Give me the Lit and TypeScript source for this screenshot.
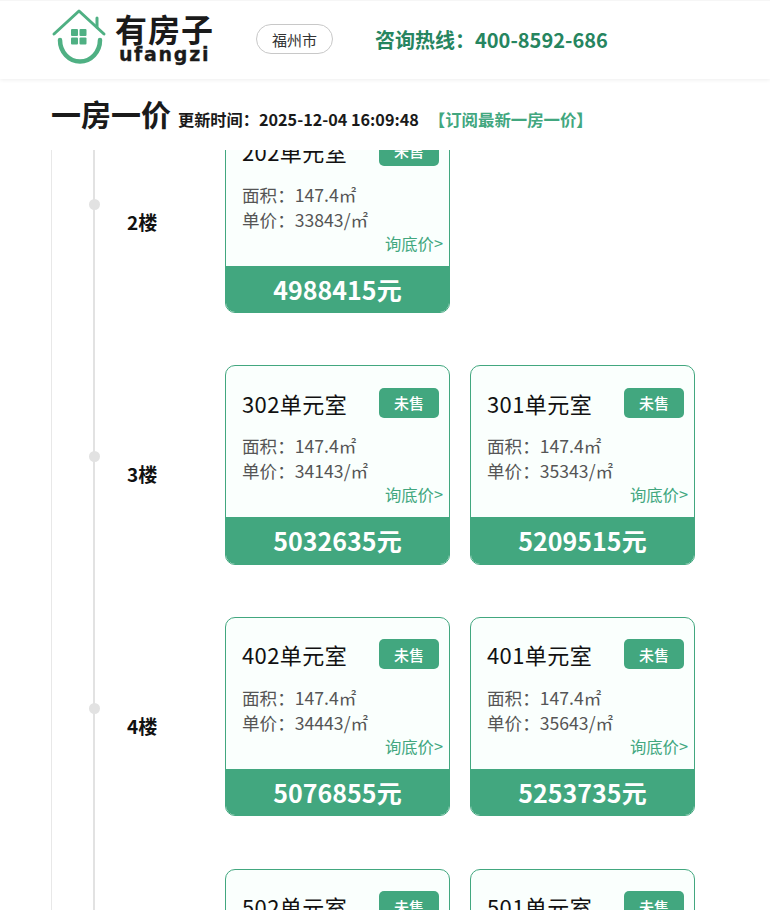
import { LitElement, html, css } from "lit";
import { customElement } from "lit/decorators.js";

interface Unit { room: string; unit: string; total: string }
interface Floor { label: string; units: Unit[] }

const FLOORS: Floor[] = [
  { label: "2楼", units: [{ room: "202", unit: "33843", total: "4988415" }] },
  { label: "3楼", units: [{ room: "302", unit: "34143", total: "5032635" }, { room: "301", unit: "35343", total: "5209515" }] },
  { label: "4楼", units: [{ room: "402", unit: "34443", total: "5076855" }, { room: "401", unit: "35643", total: "5253735" }] },
  { label: "5楼", units: [{ room: "502", unit: "34743", total: "5121075" }, { room: "501", unit: "35943", total: "5297955" }] },
];

@customElement("app-root")
export class AppRoot extends LitElement {
  static styles = css`
    :host { display: block; width: 770px; height: 910px; overflow: hidden; background: #fff; font-family: "Noto Sans CJK SC", "Noto Sans", sans-serif; color: #111; }
    .header { height: 79px; display: flex; align-items: center; padding: 0 0 1px 51px; background: #fff; box-shadow: 0 1px 4px rgba(0,0,0,.07), inset 0 1px 0 #f6f6f6; position: relative; box-sizing: border-box; }
    .logo { width: 162px; height: 56px; display: flex; align-items: center; gap: 8px; flex: none; margin-top: -7px; }
    .logo svg { flex: none; width: 56px; height: 56px; }
    .brand { display: flex; flex-direction: column; align-items: center; width: 100px; margin-top: 4px; white-space: nowrap; }
    .brand-cn { font-size: 32px; line-height: 32px; font-weight: 700; color: #1a1a1a; letter-spacing: 1px; }
    .brand-en { font-family: "DejaVu Sans", sans-serif; font-size: 19px; line-height: 20px; font-weight: 700; color: #1a1a1a; letter-spacing: 1.7px; -webkit-text-stroke: .3px #1a1a1a; }
    .city { margin-left: 43px; width: 77px; height: 30px; box-sizing: border-box; border: 1px solid #c8c8c8; border-radius: 15px; display: flex; align-items: center; justify-content: center; font-size: 15px; color: #333; }
    .hot { margin-left: 42px; font-size: 20px; font-weight: 700; color: #26855f; }
    .title { height: 71px; box-sizing: border-box; display: flex; align-items: baseline; padding: 13px 0 0 51px; }
    .title h1 { margin: 0; font-size: 30px; line-height: 42px; font-weight: 700; color: #1a1a1a; }
    .title .time { margin-left: 7px; font-size: 16.2px; font-weight: 700; color: #1a1a1a; }
    .title .sub { margin-left: 10px; font-size: 16.4px; font-weight: 700; color: #42a77f; }
    .scroll { height: 760px; overflow: hidden; margin-left: 51px; border-left: 1px solid #e8e8e8; position: relative; }
    .list { margin-top: -36.8px; padding-left: 41px; }
    .floor { height: 251.8px; display: flex; border-left: 2px solid #e2e2e2; position: relative; }
    .dot { position: absolute; left: -6.5px; top: 86px; width: 11px; height: 11px; border-radius: 50%; background: #e2e2e2; }
    .label { width: 130px; padding: 16.5px 0 0 32px; box-sizing: border-box; height: 200px; display: flex; align-items: center; font-size: 19px; font-weight: 700; color: #111; flex: none; }
    .cards { display: flex; gap: 20px; align-items: flex-start; }
    .card { width: 225px; height: 199.5px; box-sizing: border-box; border: 1px solid #42a77f; border-radius: 10px; background: #fafffd; overflow: hidden; display: flex; flex-direction: column; }
    .top { display: flex; justify-content: space-between; align-items: flex-start; padding: 21.6px 10px 0 16px; }
    .room { font-size: 22px; line-height: 30px; color: #111; letter-spacing: .4px; }
    .badge { width: 60px; height: 30px; border-radius: 5px; background: #42a77f; color: #fff; font-size: 15px; font-weight: 500; display: flex; align-items: center; justify-content: center; }
    .info { padding: 15.8px 0 0 16px; font-size: 17.6px; line-height: 25px; color: #555; }
    .ask { align-self: flex-end; margin: 0 6px 0 0; font-size: 16.35px; line-height: 22px; color: #42a77f; }
    .total { margin-top: auto; height: 46.1px; background: #42a77f; color: #fff; font-size: 25px; font-weight: 700; display: flex; align-items: center; justify-content: center; }
  `;

  render() {
    return html`
      <div class="header">
        <div class="logo">
          <svg viewBox="0 0 56 56" fill="none">
            <path d="M3 26 L28 3 L53 26" stroke="#4fb083" stroke-width="3" stroke-linecap="round" stroke-linejoin="round"/>
            <path d="M46 19 V10" stroke="#4fb083" stroke-width="3" stroke-linecap="round"/>
            <path d="M9 32 A20 21.5 0 0 0 49 32" stroke="#4fb083" stroke-width="4.5" stroke-linecap="round"/>
            <rect x="20" y="21" width="7" height="7" rx="1" fill="#4fb083"/>
            <rect x="28.5" y="21" width="7" height="7" rx="1" fill="#4fb083"/>
            <rect x="20" y="29.5" width="7" height="7" rx="1" fill="#4fb083"/>
            <rect x="28.5" y="29.5" width="7" height="7" rx="1" fill="#4fb083"/>
          </svg>
          <div class="brand"><span class="brand-cn">有房子</span><span class="brand-en">ufangzi</span></div>
        </div>
        <div class="city">福州市</div>
        <div class="hot">咨询热线：400-8592-686</div>
      </div>
      <div class="title">
        <h1>一房一价</h1>
        <span class="time">更新时间：2025-12-04 16:09:48</span>
        <span class="sub">【订阅最新一房一价】</span>
      </div>
      <div class="scroll"><div class="list">
        ${FLOORS.map((f) => html`
          <div class="floor">
            <span class="dot"></span>
            <div class="label">${f.label}</div>
            <div class="cards">
              ${f.units.map((u) => html`
                <div class="card">
                  <div class="top"><span class="room">${u.room}单元室</span><span class="badge">未售</span></div>
                  <div class="info"><div>面积：147.4㎡</div><div>单价：${u.unit}/㎡</div></div>
                  <div class="ask">询底价&gt;</div>
                  <div class="total">${u.total}元</div>
                </div>`)}
            </div>
          </div>`)}
      </div></div>
    `;
  }
}
